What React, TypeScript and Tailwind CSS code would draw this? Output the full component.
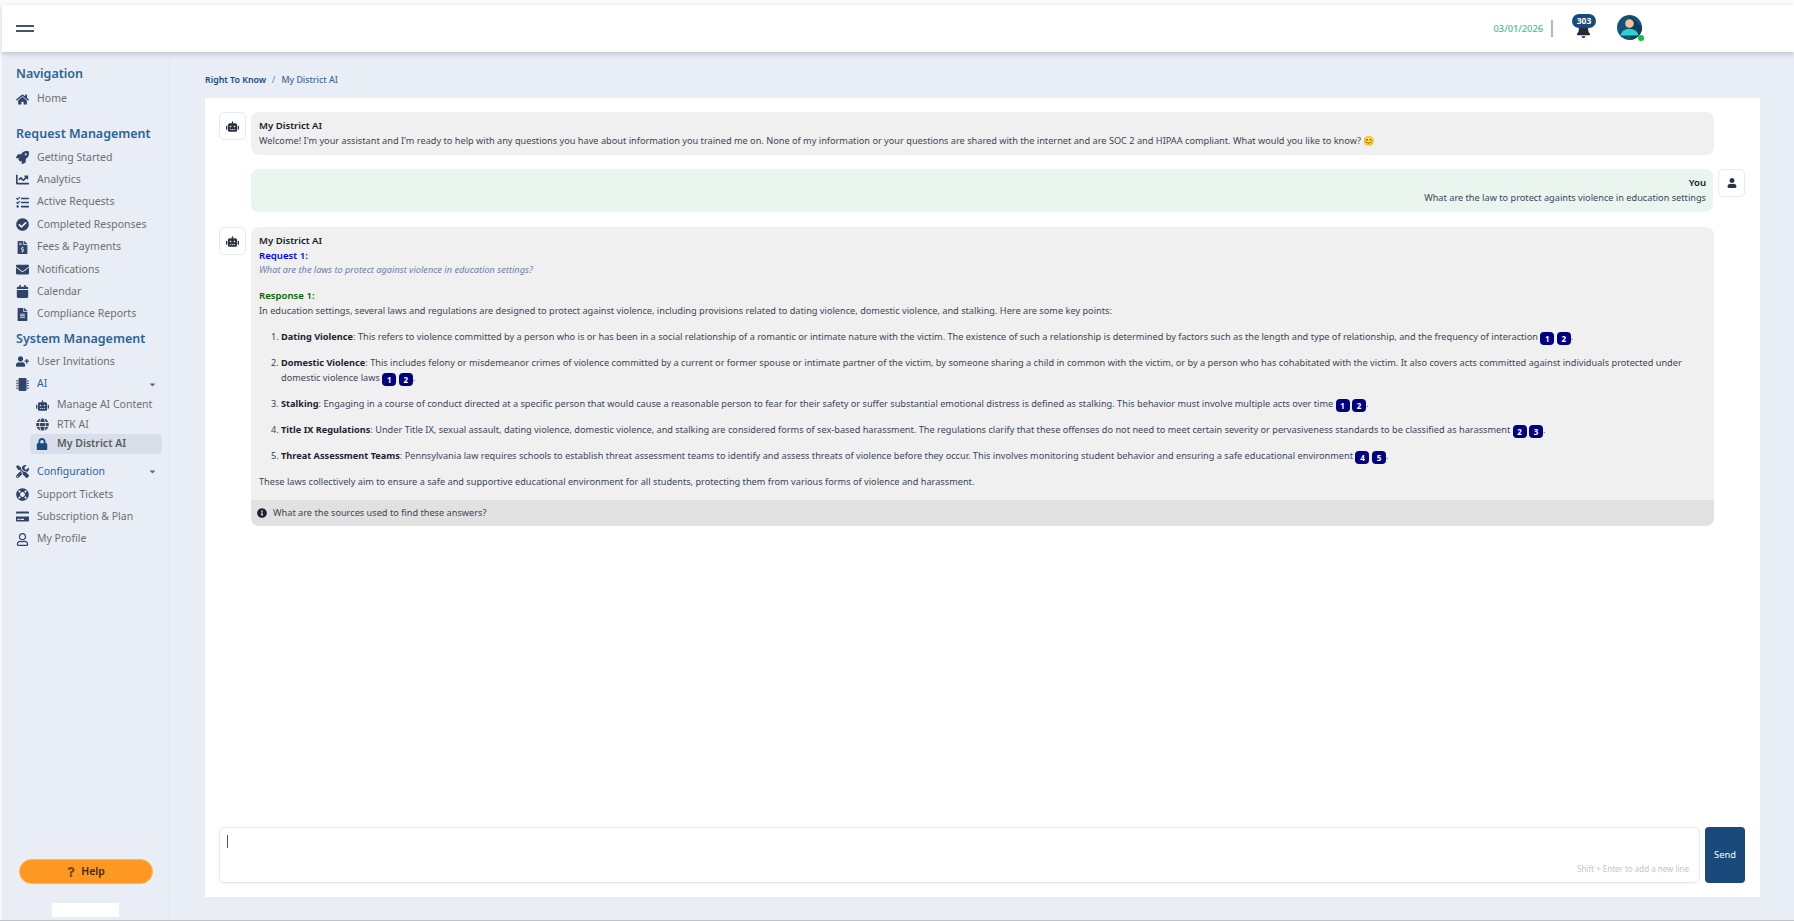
import type { ReactNode } from "react";
import {
  FaBell,
  FaCalendar,
  FaCaretDown,
  FaChartLine,
  FaCheckCircle,
  FaCreditCard,
  FaEnvelope,
  FaFileAlt,
  FaFileInvoiceDollar,
  FaGlobe,
  FaHome,
  FaInfoCircle,
  FaLifeRing,
  FaLock,
  FaMicrochip,
  FaQuestion,
  FaRegUser,
  FaRobot,
  FaRocket,
  FaTasks,
  FaTools,
  FaUser,
  FaUserPlus,
} from "react-icons/fa";

const ICON = "w-[13px] h-[13px] text-[#2f4468] shrink-0";

function SectionTitle({ children, className }: { children: ReactNode; className: string }) {
  return <div className={`pl-[14px] text-[12.5px] leading-[18px] font-semibold text-[#2a6496] ${className}`}>{children}</div>;
}

function NavItem({ icon, label, blue, caret }: { icon: ReactNode; label: string; blue?: boolean; caret?: boolean }) {
  return (
    <div className="h-[22.4px] pl-[14px] pr-[10px] flex items-center text-[10.5px]">
      <span className="w-[21px] flex items-center">{icon}</span>
      <span className={blue ? "text-[#2a6496]" : "text-[#6f6f6f]"}>{label}</span>
      {caret && <FaCaretDown className="ml-auto w-[9px] h-[9px] mr-[2px] text-[#5d6b82]" />}
    </div>
  );
}

function SubItem({ icon, label, active }: { icon: ReactNode; label: string; active?: boolean }) {
  return (
    <div
      className={`h-[19.5px] ml-[28px] mr-[7px] pl-[6px] rounded-[4px] flex items-center text-[10.5px] ${
        active ? "bg-[#d9dfea] font-semibold text-[#5c5c5c]" : "text-[#6f6f6f]"
      }`}
    >
      <span className="w-[21px] flex items-center">{icon}</span>
      {label}
    </div>
  );
}

function Sidebar() {
  return (
    <aside className="w-[170px] shrink-0 border-r border-[#e1e5ee] border-l-2 border-l-[#f6f7fa] flex flex-col pt-[13px]">
      <SectionTitle className="">Navigation</SectionTitle>
      <div className="mt-[5px]">
        <NavItem icon={<FaHome className={ICON} />} label="Home" />
      </div>
      <SectionTitle className="mt-[15px]">Request Management</SectionTitle>
      <div className="mt-[3px]">
        <NavItem icon={<FaRocket className={ICON} />} label="Getting Started" />
        <NavItem icon={<FaChartLine className={ICON} />} label="Analytics" />
        <NavItem icon={<FaTasks className={ICON} />} label="Active Requests" />
        <NavItem icon={<FaCheckCircle className={ICON} />} label="Completed Responses" />
        <NavItem icon={<FaFileInvoiceDollar className={ICON} />} label="Fees & Payments" />
        <NavItem icon={<FaEnvelope className={ICON} />} label="Notifications" />
        <NavItem icon={<FaCalendar className={ICON} />} label="Calendar" />
        <NavItem icon={<FaFileAlt className={ICON} />} label="Compliance Reports" />
      </div>
      <SectionTitle className="mt-[4px]">System Management</SectionTitle>
      <div className="mt-[3px]">
        <NavItem icon={<FaUserPlus className={ICON} />} label="User Invitations" />
        <NavItem icon={<FaMicrochip className={ICON} />} label="AI" blue caret />
        <SubItem icon={<FaRobot className={ICON} />} label="Manage AI Content" />
        <SubItem icon={<FaGlobe className={ICON} />} label="RTK AI" />
        <SubItem icon={<FaLock className="w-[12px] h-[12px] text-[#1a4a7c]" />} label="My District AI" active />
      </div>
      <div className="mt-[7px]">
        <NavItem icon={<FaTools className={ICON} />} label="Configuration" blue caret />
        <NavItem icon={<FaLifeRing className={ICON} />} label="Support Tickets" />
        <NavItem icon={<FaCreditCard className={ICON} />} label="Subscription & Plan" />
        <NavItem icon={<FaRegUser className={ICON} />} label="My Profile" />
      </div>
      <div className="mt-auto pb-[3px] flex flex-col items-center">
        <button className="w-[134px] h-[25px] rounded-full bg-[#ff9823] border border-[#ffb45f] flex items-center justify-center gap-[5px] text-[10.5px] font-semibold text-[#3a2a12]">
          <FaQuestion className="w-[10px] h-[10px] text-[#7a4a10]" />
          Help
        </button>
        <div className="mt-[19px] w-[67px] h-[14px] bg-white" />
      </div>
    </aside>
  );
}

function Avatar() {
  return (
    <div className="relative w-[25px] h-[25px]">
      <svg viewBox="0 0 25 25" className="w-[25px] h-[25px]">
        <defs>
          <clipPath id="av">
            <circle cx="12.5" cy="12.5" r="12.5" />
          </clipPath>
        </defs>
        <g clipPath="url(#av)">
          <rect width="25" height="25" fill="#14527a" />
          <path d="M12.5 0L25 12.5V25H14z" fill="#0e3d5e" />
          <circle cx="12.5" cy="8.5" r="4.3" fill="#f6c49b" />
          <path d="M3.5 20.5c1-5 4.5-6.5 9-6.5s8 1.500 9 6.500z" fill="#2fd0cf" />
        </g>
      </svg>
      <span className="absolute right-[-2px] bottom-[-1px] w-[6px] h-[6px] rounded-full bg-[#12c23a]" />
    </div>
  );
}

function Header() {
  return (
    <div className="relative z-10 pt-[5px] pl-[2px] bg-[#fbfbfc] shrink-0">
      <header className="h-[47px] bg-white shadow-[0_2px_5px_rgba(100,115,150,0.35)] flex items-center pl-[14px]">
        <div className="w-[18px] flex flex-col gap-[3px]">
          <span className="h-[2px] bg-[#4a5068]" />
          <span className="h-[2px] bg-[#4a5068]" />
        </div>
        <div className="ml-auto flex items-center mr-[152px]">
          <span className="text-[9.25px] font-medium text-[#3cc08f]">03/01/2026</span>
          <span className="ml-[8px] w-[2px] h-[17px] bg-[#a9b8cc]" />
          <div className="relative ml-[19px] w-[24px] h-[26px] mb-[3px]">
            <FaBell className="absolute left-[4px] top-[9px] w-[15px] h-[15px] text-[#232b3a]" />
            <span className="absolute left-0 top-0 w-[24px] h-[14px] rounded-full bg-[#1a4a7c] text-white text-[8.5px] font-bold leading-[14px] text-center">
              303
            </span>
          </div>
          <div className="ml-[21px] mb-[3px]">
            <Avatar />
          </div>
        </div>
      </header>
    </div>
  );
}

function BotBox() {
  return (
    <div className="w-[27px] h-[28px] rounded-[5px] border border-[#e6e9f2] bg-white flex items-center justify-center shrink-0">
      <FaRobot className="w-[13px] h-[13px] text-[#2b3445]" />
    </div>
  );
}

function Cite({ n }: { n: number }) {
  return (
    <span className="inline-block w-[14px] h-[13px] ml-[2.5px] first:ml-0 rounded-[4px] bg-[#000080] text-white text-[8px] font-bold leading-[13px] text-center align-[-2px]">
      {n}
    </span>
  );
}

function Point({ title, children }: { title: string; children: ReactNode }) {
  return (
    <li className="mb-[11px]">
      <strong className="font-bold text-[#1c2130]">{title}</strong>: {children}
    </li>
  );
}

function Chat() {
  return (
    <div className="flex-1 min-h-0 text-[9.2px] leading-[14.7px] text-[#3c4658]">
      <div className="flex gap-[5px]">
        <BotBox />
        <div className="w-[1463px] h-[43px] rounded-[8px] bg-[#f0f0f0] px-[8px] pt-[7px]">
          <div className="text-[9.6px] font-semibold text-[#141a28]">My District AI</div>
          <div>
            Welcome! I'm your assistant and I'm ready to help with any questions you have about information you trained me on. None of my information or your questions are shared with the internet and are SOC 2 and HIPAA compliant. What would you like to know? 😊
          </div>
        </div>
      </div>

      <div className="flex gap-[5px] ml-[32px] mt-[14px]">
        <div className="w-[1463px] h-[43px] rounded-[8px] bg-[#e9f5ee] px-[7px] pt-[7px] text-right">
          <div className="text-[9.6px] font-semibold text-[#141a28]">You</div>
          <div>What are the law to protect againts violence in education settings</div>
        </div>
        <div className="w-[27px] h-[28px] rounded-[5px] border border-[#e6e9f2] bg-white flex items-center justify-center">
          <FaUser className="w-[10px] h-[10px] text-[#2b3445]" />
        </div>
      </div>

      <div className="flex gap-[5px] mt-[15px]">
        <BotBox />
        <div className="w-[1463px] rounded-[8px] bg-[#f0f0f0] overflow-hidden">
          <div className="px-[8px] pt-[7px] pb-[11px]">
            <div className="text-[9.6px] font-semibold text-[#141a28]">My District AI</div>
            <div className="text-[9.6px] font-semibold text-[#0000ff]">Request 1:</div>
            <div className="italic text-[#6c7fa8]">What are the laws to protect against violence in education settings?</div>
            <div className="text-[9.6px] font-semibold text-[#006400] mt-[11px]">Response 1:</div>
            <div>
              In education settings, several laws and regulations are designed to protect against violence, including provisions related to dating violence, domestic violence, and stalking. Here are some key points:
            </div>
            <ol className="list-decimal pl-[22px] mt-[11.5px]">
              <Point title="Dating Violence">
                This refers to violence committed by a person who is or has been in a social relationship of a romantic or intimate nature with the victim. The existence of such a relationship is determined by factors such as the length and type of relationship, and the frequency of interaction{" "}
                <span><Cite n={1} /><Cite n={2} /></span>.
              </Point>
              <Point title="Domestic Violence">
                This includes felony or misdemeanor crimes of violence committed by a current or former spouse or intimate partner of the victim, by someone sharing a child in common with the victim, or by a person who has cohabitated with the victim. It also covers acts committed against individuals protected under domestic violence laws{" "}
                <span><Cite n={1} /><Cite n={2} /></span>.
              </Point>
              <Point title="Stalking">
                Engaging in a course of conduct directed at a specific person that would cause a reasonable person to fear for their safety or suffer substantial emotional distress is defined as stalking. This behavior must involve multiple acts over time{" "}
                <span><Cite n={1} /><Cite n={2} /></span>.
              </Point>
              <Point title="Title IX Regulations">
                Under Title IX, sexual assault, dating violence, domestic violence, and stalking are considered forms of sex-based harassment. The regulations clarify that these offenses do not need to meet certain severity or pervasiveness standards to be classified as harassment{" "}
                <span><Cite n={2} /><Cite n={3} /></span>.
              </Point>
              <Point title="Threat Assessment Teams">
                Pennsylvania law requires schools to establish threat assessment teams to identify and assess threats of violence before they occur. This involves monitoring student behavior and ensuring a safe educational environment{" "}
                <span><Cite n={4} /><Cite n={5} /></span>.
              </Point>
            </ol>
            <div>These laws collectively aim to ensure a safe and supportive educational environment for all students, protecting them from various forms of violence and harassment.</div>
          </div>
          <div className="h-[26px] bg-[#e1e1e1] pl-[6px] flex items-center gap-[6px]">
            <FaInfoCircle className="w-[10px] h-[10px] text-[#1c2130]" />
            What are the sources used to find these answers?
          </div>
        </div>
      </div>
    </div>
  );
}

function Composer() {
  return (
    <div className="flex gap-[5px] shrink-0">
      <div className="relative flex-1 h-[56px] rounded-[5px] border border-[#e6e9ec] shadow-[0_1px_2px_rgba(0,0,0,0.04)] bg-white">
        <span className="absolute left-[7px] top-[7px] w-[1px] h-[13px] bg-[#555]" />
        <span className="absolute right-[10px] bottom-[7px] text-[8px] text-[#c9c4c4]">Shift + Enter to add a new line</span>
      </div>
      <button className="w-[40px] h-[56px] rounded-[4px] bg-[#1a4a7c] text-white text-[9.3px]">Send</button>
    </div>
  );
}

export default function App() {
  return (
    <div
      className="h-screen w-full overflow-hidden flex flex-col bg-[#e9edf5] border-b border-[#bfc1c6]"
      style={{ fontFamily: '"Noto Sans", "Open Sans", sans-serif' }}
    >
      <Header />
      <div className="flex-1 min-h-0 flex">
        <Sidebar />
        <main className="flex-1 min-w-0 pl-[35px] pr-[34px] pb-[23px] flex flex-col">
          <div className="h-[46px] pt-[21px] text-[8.8px] leading-[14px] flex gap-[6px]">
            <span className="font-semibold text-[#1a4a7c]">Right To Know</span>
            <span className="text-[#6b7a90]">/</span>
            <span className="font-medium text-[#3f6a96]">My District AI</span>
          </div>
          <div className="flex-1 min-h-0 bg-white pt-[14px] pl-[14px] pr-[15px] pb-[14px] flex flex-col">
            <Chat />
            <Composer />
          </div>
        </main>
      </div>
    </div>
  );
}
